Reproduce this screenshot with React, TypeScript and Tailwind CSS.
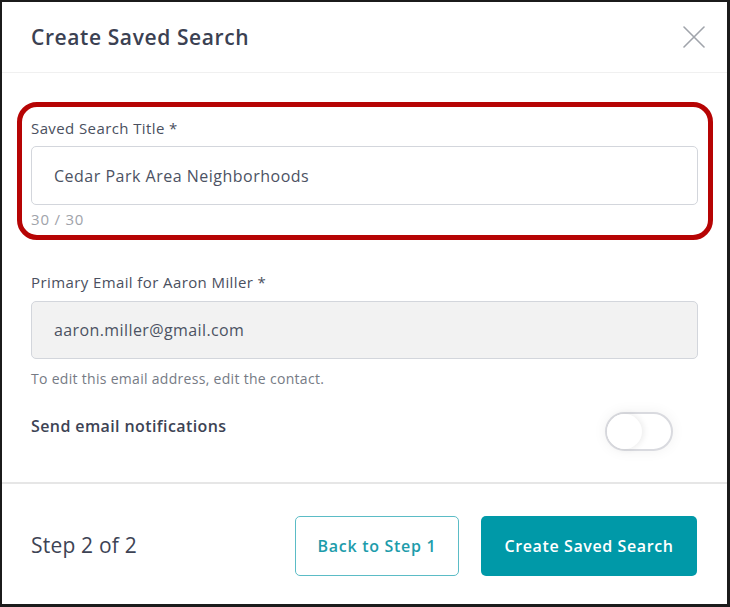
import React from "react";

const font = { fontFamily: '"Open Sans", "Liberation Sans", sans-serif' };

function CloseIcon() {
  return (
    <svg width="22" height="22" viewBox="0 0 22 22" fill="none">
      <path d="M1 1L21 21M21 1L1 21" stroke="#a0a4ab" strokeWidth="1.6" strokeLinecap="round" />
    </svg>
  );
}

function Toggle() {
  return (
    <div className="w-[68px] h-[39px] rounded-full border-2 border-[#d9dadf] bg-white relative shadow-[0_0_14px_rgba(0,0,0,0.06)]">
      <div className="absolute left-0 top-0 h-[35px] w-[35px] rounded-full bg-white shadow-[2px_0_6px_rgba(0,0,0,0.08)]" />
    </div>
  );
}

export default function App() {
  return (
    <div style={font} className="w-[730px] h-[607px] bg-white border-[#1b1b1b] border-l-2 border-t-2 border-r-[3px] border-b-[3px] flex flex-col text-[#3d4354]">
      {/* header */}
      <div className="h-[71px] flex items-center justify-between pl-[29px] pr-[22px] border-b border-[#f0f0f0]">
        <h2 className="text-[21px] font-semibold tracking-[0.6px] text-[#3b4152] mt-[2px]">Create Saved Search</h2>
        <CloseIcon />
      </div>

      {/* body */}
      <div className="flex-1 px-[29px] pt-[45px]">
        <div className="relative">
          <div className="absolute -left-[14px] -right-[15px] -top-[16px] -bottom-[11px] border-[5px] border-[#b60404] rounded-[20px] pointer-events-none" />
          <label className="block text-[15px] tracking-[0.4px] text-[#4a5060] leading-[20px]">Saved Search Title *</label>
          <div className="mt-[8px] h-[59px] rounded-[5px] border border-[#d3d6dc] flex items-center pl-[22px] text-[16px] tracking-[0.5px] text-[#4c5263]">
            Cedar Park Area Neighborhoods
          </div>
          <div className="mt-[4px] text-[15px] tracking-[0.8px] text-[#a0a3aa] leading-[20px]">30 / 30</div>
        </div>

        <label className="block mt-[43px] text-[15px] tracking-[0.4px] text-[#4a5060] leading-[20px]">Primary Email for Aaron Miller *</label>
        <div className="mt-[9px] h-[58px] rounded-[5px] border border-[#d3d6dc] bg-[#f2f2f2] flex items-center pl-[22px] text-[16px] tracking-[0.4px] text-[#4c5263]">
          aaron.miller@gmail.com
        </div>
        <div className="mt-[10px] text-[14px] tracking-[0.3px] text-[#767b85] leading-[20px]">To edit this email address, edit the contact.</div>

        <div className="mt-[25px] flex items-start justify-between pr-[25px]">
          <div className="text-[16px] font-semibold tracking-[0.4px] text-[#3d4354] leading-[24px]">Send email notifications</div>
          <div className="mt-[-2px]">
            <Toggle />
          </div>
        </div>
      </div>

      {/* footer */}
      <div className="h-[122px] border-t-2 border-[#e6e6e6] flex items-center justify-between pl-[29px] pr-[30px] pt-[4px]">
        <div className="text-[21px] tracking-[0.2px] text-[#3d4354]">Step 2 of 2</div>
        <div className="flex items-center gap-[22px]">
          <button className="h-[60px] w-[164px] rounded-[5px] border-[1.5px] border-[#5bbcc6] text-[16px] font-semibold tracking-[0.7px] text-[#1d9cab] bg-white">
            Back to Step 1
          </button>
          <button className="h-[60px] w-[216px] rounded-[5px] bg-[#0099a8] text-[16px] font-semibold tracking-[0.6px] text-white">
            Create Saved Search
          </button>
        </div>
      </div>
    </div>
  );
}
